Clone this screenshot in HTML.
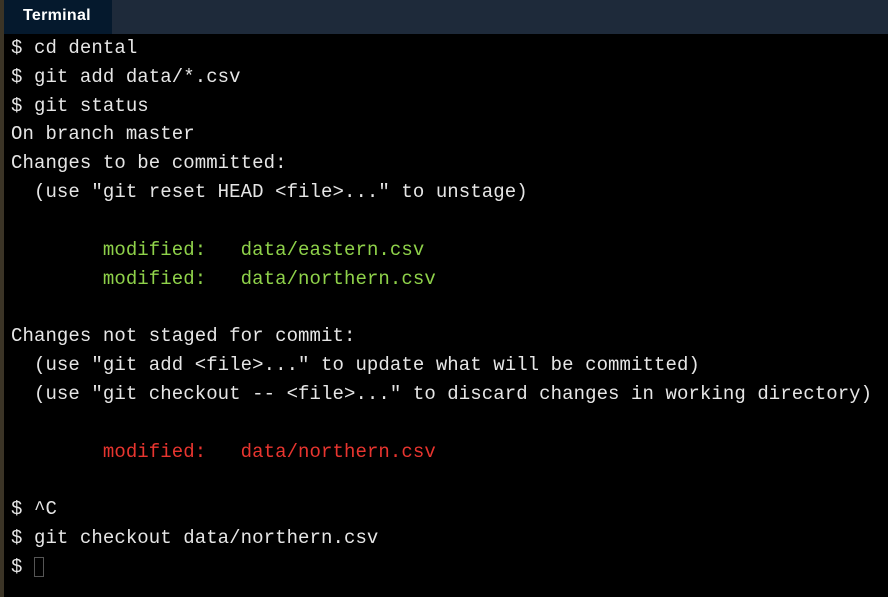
<!DOCTYPE html>
<html><head><meta charset="utf-8"><style>
html,body{margin:0;padding:0;width:888px;height:597px;overflow:hidden;background:#000;}
.hdr{position:absolute;left:0;top:0;width:888px;height:34px;background:#1e2a3a;}
.tab{position:absolute;left:4px;top:0;width:108px;height:34px;background:#05192d;color:#fff;font:bold 16px "Liberation Sans",sans-serif;line-height:31px;padding-left:19px;box-sizing:border-box;letter-spacing:0.3px;}
.lb{position:absolute;left:0;top:0;width:4px;height:597px;background:#3b3426;}
pre{position:absolute;left:11px;top:34px;margin:0;font:19px "Liberation Mono",monospace;line-height:28.83px;color:#e6e6e6;letter-spacing:0.08px;}
.g{color:#8fd24a}.r{color:#e8352f}
.cur{display:inline-block;width:10px;height:20px;border:1px solid #555;vertical-align:-5px;box-sizing:border-box;}
</style></head><body>
<div class="hdr"><div class="tab">Terminal</div></div>
<div class="lb"></div>
<pre>$ cd dental
$ git add data/*.csv
$ git status
On branch master
Changes to be committed:
  (use "git reset HEAD &lt;file&gt;..." to unstage)

        <span class="g">modified:   data/eastern.csv</span>
        <span class="g">modified:   data/northern.csv</span>

Changes not staged for commit:
  (use "git add &lt;file&gt;..." to update what will be committed)
  (use "git checkout -- &lt;file&gt;..." to discard changes in working directory)

        <span class="r">modified:   data/northern.csv</span>

$ ^C
$ git checkout data/northern.csv
$ <span class="cur"></span></pre>
</body></html>
